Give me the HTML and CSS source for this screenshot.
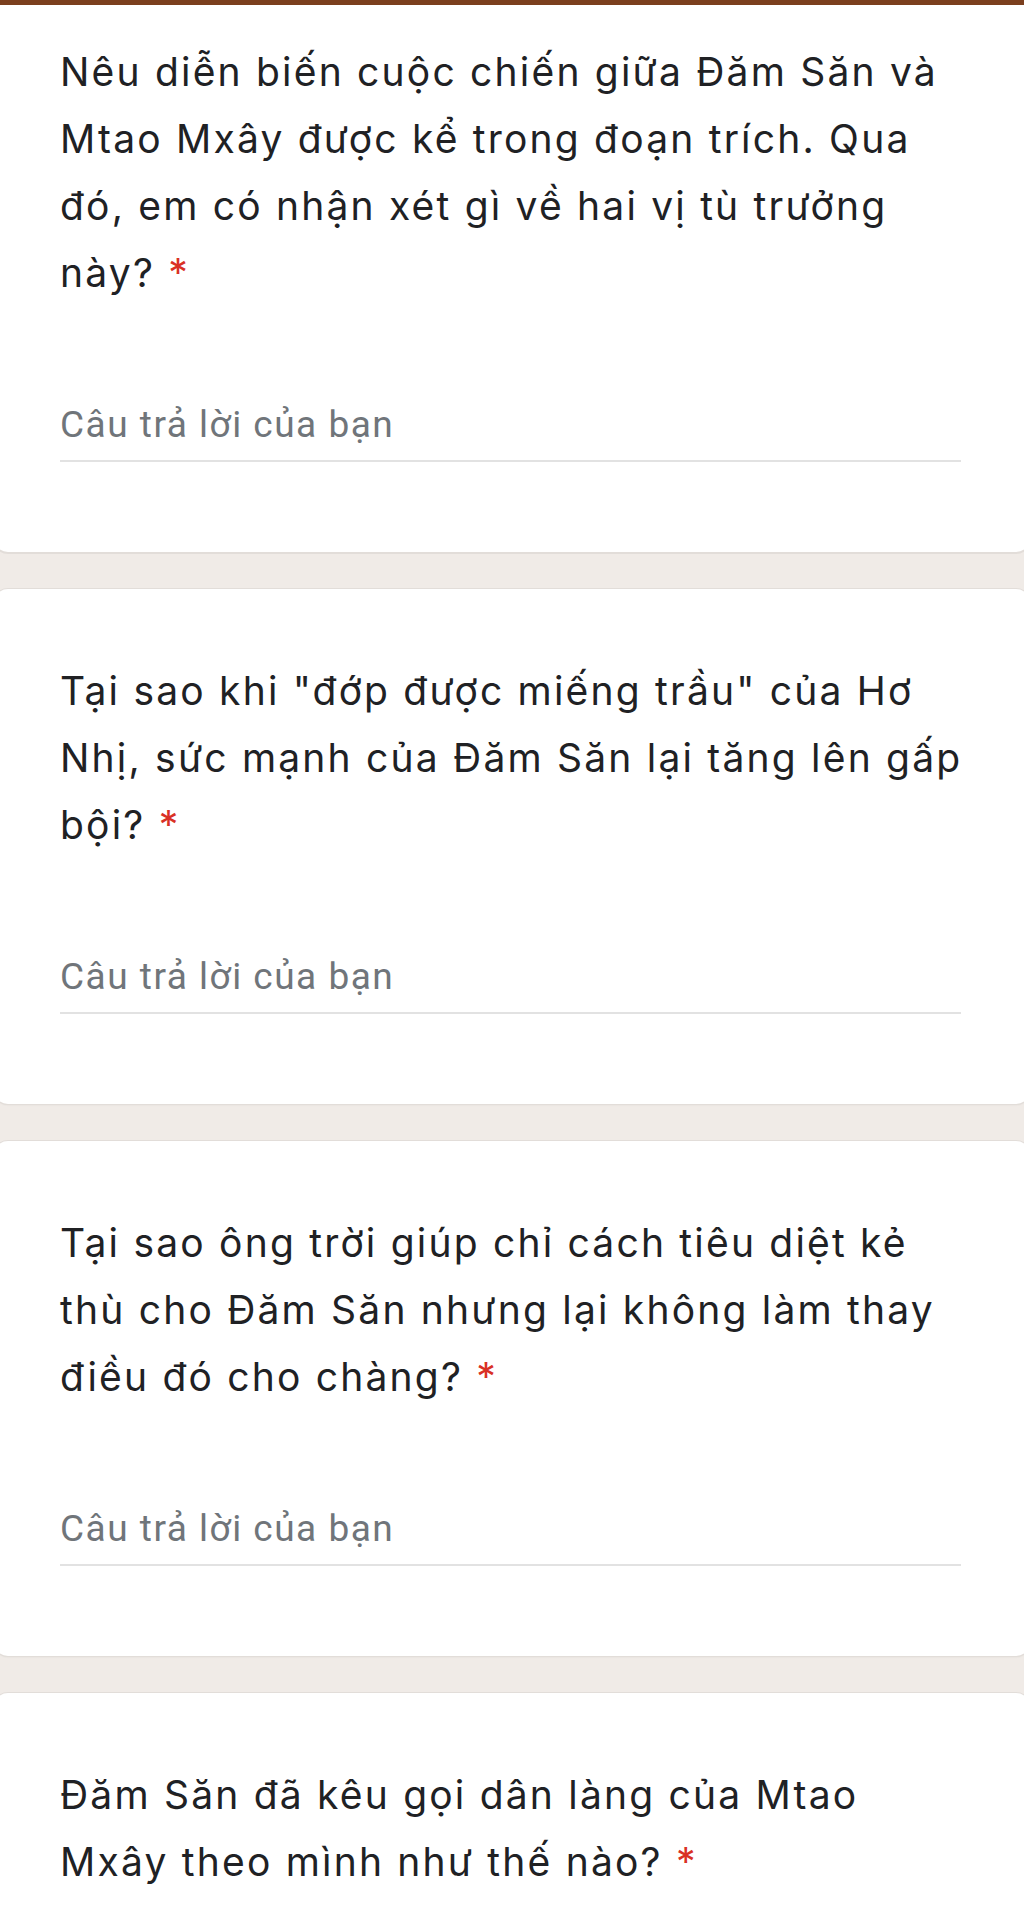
FILE: index.html
```html
<!DOCTYPE html>
<html lang="vi">
<head>
<meta charset="utf-8">
<title>Biểu mẫu</title>
<link rel="stylesheet" href="styles.css">
</head>
<body>
<div class="topbar"></div>
<main class="form">
  <section class="card card-first">
    <div class="question">Nêu diễn biến cuộc chiến giữa Đăm Săn và<br>Mtao Mxây được kể trong đoạn trích. Qua<br>đó, em có nhận xét gì về hai vị tù trưởng<br>này? <span class="req">*</span></div>
    <div class="answer">Câu trả lời của bạn</div>
  </section>
  <section class="card">
    <div class="question">Tại sao khi "đớp được miếng trầu" của Hơ<br>Nhị, sức mạnh của Đăm Săn lại tăng lên gấp<br>bội? <span class="req">*</span></div>
    <div class="answer">Câu trả lời của bạn</div>
  </section>
  <section class="card">
    <div class="question">Tại sao ông trời giúp chỉ cách tiêu diệt kẻ<br>thù cho Đăm Săn nhưng lại không làm thay<br>điều đó cho chàng? <span class="req">*</span></div>
    <div class="answer">Câu trả lời của bạn</div>
  </section>
  <section class="card">
    <div class="question">Đăm Săn đã kêu gọi dân làng của Mtao<br>Mxây theo mình như thế nào? <span class="req">*</span></div>
  </section>
</main>
</body>
</html>
```

FILE: styles.css
```css
html, body {
  margin: 0;
  padding: 0;
}
body {
  background: #f0ebe7;
  width: 1024px;
  height: 1930px;
  overflow: hidden;
}
.topbar {
  height: 5px;
  background: #7b3f1e;
}
.form {
  display: flex;
  flex-direction: column;
  gap: 37px;
  margin: 0 -6px;
}
.card {
  background: #fff;
  border-radius: 14px;
  box-shadow: 0 0 0 1px #e2ddd9, 0 1px 2px rgba(0,0,0,0.08);
  padding: 68px 66px 90px 66px;
}
.card-first {
  border-radius: 0 0 14px 14px;
  padding-top: 33px;
  box-shadow: 0 1px 0 1px #e2ddd9;
}
.question {
  font-family: Inter, "Noto Sans", sans-serif;
  font-size: 39px;
  line-height: 67px;
  letter-spacing: 2.2px;
  color: #202124;
  white-space: nowrap;
}
.req {
  color: #d93025;
}
.answer {
  margin-top: 95px;
  width: 901px;
  font-family: Roboto, "Liberation Sans", sans-serif;
  font-size: 37px;
  line-height: 48px;
  letter-spacing: 1.5px;
  color: #70757a;
  padding-bottom: 11px;
  border-bottom: 2px solid #e2e2e2;
}
```
